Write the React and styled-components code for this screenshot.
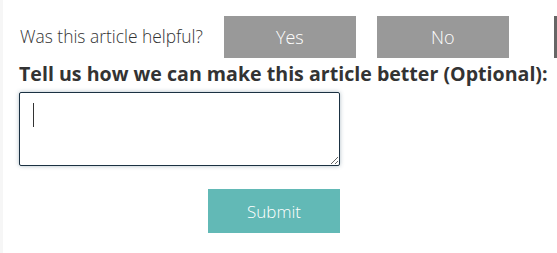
import React from "react";
import styled, { createGlobalStyle } from "styled-components";

const Global = createGlobalStyle`
  html, body { margin: 0; padding: 0; background: #ffffff; }
  body { font-family: "Open Sans", "Liberation Sans", sans-serif; color: #333; }
`;

const Page = styled.div`
  box-sizing: border-box;
  min-height: 253px;
  border-left: 3px solid #f6f6f6;
  padding: 16px 0 0 16px;
  overflow: hidden;
`;

const Row = styled.div`
  display: flex;
  align-items: center;
  gap: 21px;
  white-space: nowrap;
`;

const Question = styled.span`
  font-size: 17.4px;
  font-weight: 300;
  color: #333;
  padding-left: 1px;
  margin-top: -3px;
`;

const VoteButton = styled.button`
  flex: none;
  width: 132px;
  height: 42px;
  border: none;
  background: ${(p) => p.$bg || "#999999"};
  color: #ffffff;
  font-family: "Open Sans", "Liberation Sans", sans-serif;
  font-size: 18px;
  font-weight: 300;
  padding: 0;
  margin-left: ${(p) => p.$offset || 0}px;
`;

const Heading = styled.h3`
  margin: 3px 0 0 0;
  font-size: 19.6px;
  line-height: 26px;
  font-weight: 700;
  color: #333;
  white-space: nowrap;
`;

const Form = styled.div`
  width: 321px;
  display: flex;
  flex-direction: column;
  align-items: flex-end;
  margin-top: 5px;
`;

const Field = styled.div`
  position: relative;
  width: 100%;
`;

const TextArea = styled.textarea`
  display: block;
  box-sizing: border-box;
  width: 321px;
  height: 74px;
  border: 1px solid #1b3142;
  border-radius: 2px;
  box-shadow: 0 0 4px rgba(80, 110, 130, 0.45);
  outline: none;
  padding: 8px 13px;
  font-family: "Open Sans", "Liberation Sans", sans-serif;
  font-size: 16px;
  caret-color: transparent;
  resize: vertical;
`;

const Caret = styled.span`
  position: absolute;
  left: 14px;
  top: 11px;
  width: 1px;
  height: 24px;
  background: #333;
`;

const SubmitButton = styled.button`
  width: 132px;
  height: 44px;
  margin-top: 23px;
  border: none;
  background: #62b9b6;
  color: #ffffff;
  font-family: "Open Sans", "Liberation Sans", sans-serif;
  font-size: 17px;
  font-weight: 300;
  padding: 0;
`;

export default function App() {
  return (
    <>
      <Global />
      <Page>
        <Row>
          <Question>Was this article helpful?</Question>
          <VoteButton>Yes</VoteButton>
          <VoteButton>No</VoteButton>
          <VoteButton $offset={24} $bg="#666666" aria-hidden="true" />
        </Row>
        <Heading>Tell us how we can make this article better (Optional):</Heading>
        <Form>
          <Field>
            <TextArea />
            <Caret />
          </Field>
          <SubmitButton>Submit</SubmitButton>
        </Form>
      </Page>
    </>
  );
}
